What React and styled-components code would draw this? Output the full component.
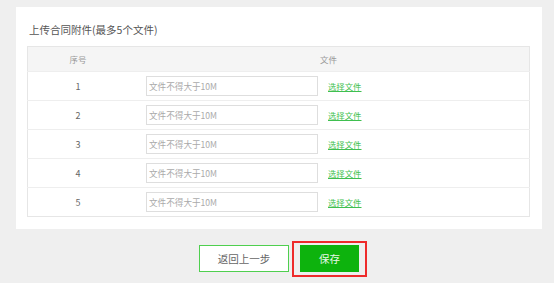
import React from "react";
import styled, { createGlobalStyle } from "styled-components";

const GlobalStyle = createGlobalStyle`
  html, body {
    margin: 0;
    background: #efefef;
    font-family: "Noto Sans CJK SC", "Liberation Sans", sans-serif;
  }
`;

const Page = styled.div`
  width: 554px;
  min-height: 283px;
  box-sizing: border-box;
  padding-top: 7px;
`;

const Panel = styled.div`
  margin-left: 16px;
  width: 526px;
  box-sizing: border-box;
  background: #fff;
  padding: 16px 12px 12px 11px;
`;

const Title = styled.h2`
  margin: 0 0 9px 2px;
  font-size: 10.5px;
  line-height: 14px;
  font-weight: normal;
  color: #555;
`;

const Table = styled.table`
  width: 503px;
  border-collapse: collapse;
  border: 1px solid #e6e6e6;
  table-layout: fixed;
`;

const HeadCell = styled.th`
  height: 24px;
  padding: 0;
  background: #f5f5f5;
  font-size: 8.5px;
  font-weight: normal;
  color: #999;
  text-align: center;
  width: ${(p) => p.$width || "auto"};
`;

const Row = styled.tr`
  border-top: 1px solid #eeeeee;
`;

const NumCell = styled.td`
  height: 28px;
  padding: 0;
  text-align: center;
  font-size: 9px;
  color: #666;
`;

const FileCell = styled.td`
  padding: 0 0 0 18px;
`;

const FileLine = styled.div`
  display: flex;
  align-items: center;
  gap: 10px;
`;

const FileInput = styled.input`
  width: 172px;
  height: 20px;
  box-sizing: border-box;
  border: 1px solid #dedede;
  padding: 0 2px;
  font-family: inherit;
  font-size: 8.6px;
  outline: none;
  &::placeholder {
    color: #aaa;
  }
`;

const PickLink = styled.a`
  font-size: 8.4px;
  color: #3fbf50;
  text-decoration: underline;
  cursor: pointer;
`;

const Footer = styled.div`
  margin: 16px 0 0 16px;
  width: 526px;
  display: flex;
  align-items: center;
  justify-content: center;
  gap: 11px;
`;

const Highlight = styled.div`
  border: 2px solid #ee2b2b;
  padding: 2px 6px 3px;
  margin: -4px -8px -5px;
`;

const Button = styled.button`
  display: block;
  margin: 0;
  height: 27px;
  width: ${(p) => (p.$primary ? "59px" : "90px")};
  box-sizing: border-box;
  border: 1px solid ${(p) => (p.$primary ? "#0db30d" : "#4fcf4f")};
  background: ${(p) => (p.$primary ? "#0db30d" : "#fff")};
  color: ${(p) => (p.$primary ? "#e8f7e8" : "#666")};
  font-family: inherit;
  font-size: 10.5px;
  line-height: 25px;
  padding: 0;
  cursor: pointer;
`;

const rows = [1, 2, 3, 4, 5];

export default function App() {
  return (
    <Page>
      <GlobalStyle />
      <Panel>
        <Title>上传合同附件(最多5个文件)</Title>
        <Table>
          <thead>
            <tr>
              <HeadCell $width="100px">序号</HeadCell>
              <HeadCell>文件</HeadCell>
            </tr>
          </thead>
          <tbody>
            {rows.map((n) => (
              <Row key={n}>
                <NumCell>{n}</NumCell>
                <FileCell>
                  <FileLine>
                    <FileInput placeholder="文件不得大于10M" />
                    <PickLink>选择文件</PickLink>
                  </FileLine>
                </FileCell>
              </Row>
            ))}
          </tbody>
        </Table>
      </Panel>
      <Footer>
        <Button>返回上一步</Button>
        <Highlight>
          <Button $primary>保存</Button>
        </Highlight>
      </Footer>
    </Page>
  );
}
